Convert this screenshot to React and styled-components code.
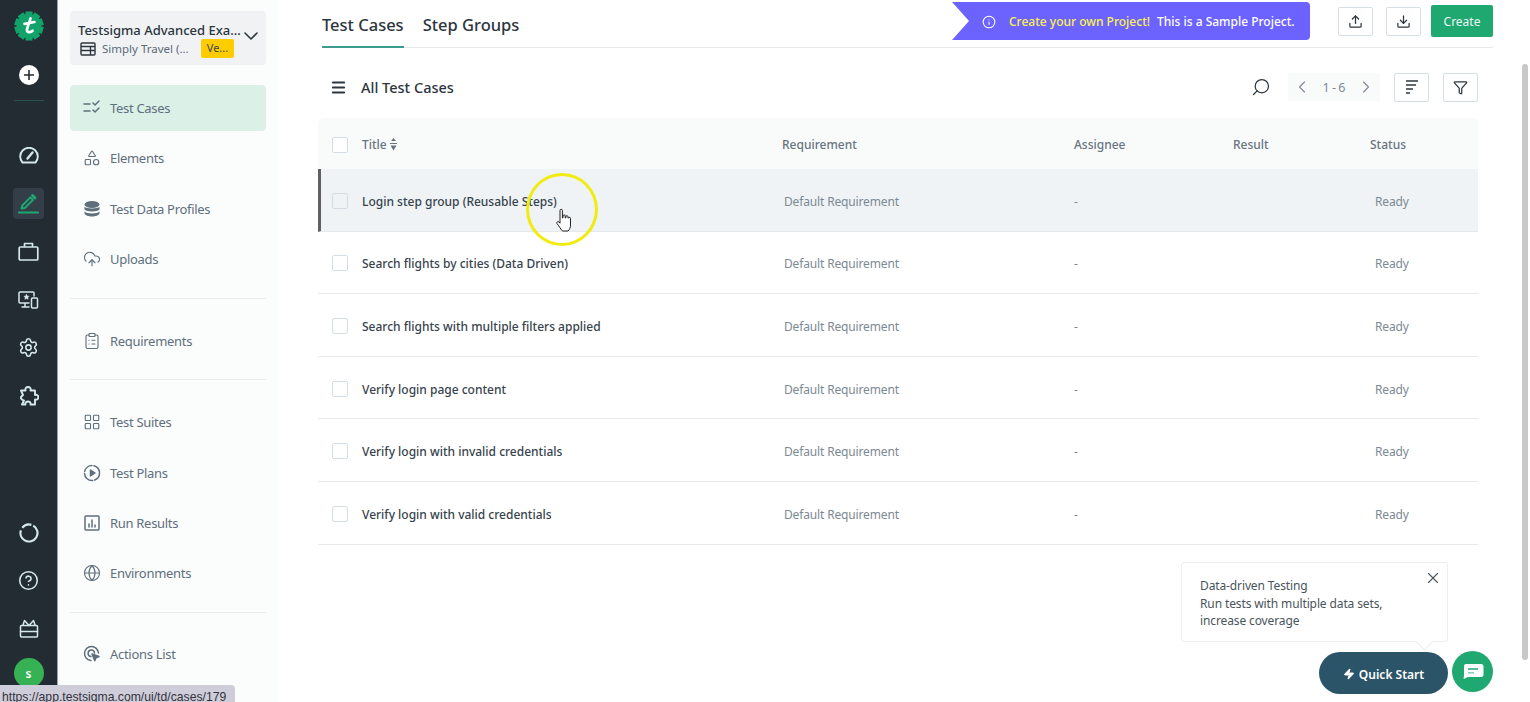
import React from "react";
import styled, { createGlobalStyle } from "styled-components";
import {
  CircleHelp,
  ChevronDown,
  ChevronLeft,
  ChevronRight,
  Settings,
  Shapes,
  CloudUpload,
  ClipboardList,
  LayoutGrid,
  Globe,
  Upload,
  Download,
  Funnel,
  Info,
  X,
  Zap,
  Menu,
  Search,
} from "lucide-react";

const GlobalStyle = createGlobalStyle`
  html, body {
    margin: 0;
    height: 100%;
    overflow: hidden;
    background: #fff;
    font-family: "Noto Sans", "Open Sans", sans-serif;
    color: #2c363e;
  }
  * { box-sizing: border-box; }
`;

const Page = styled.div`
  position: relative;
  display: flex;
  width: 1530px;
  height: 702px;
  overflow: hidden;
`;

const Rail = styled.nav`
  flex: 0 0 58px;
  display: flex;
  flex-direction: column;
  align-items: center;
  padding-top: 11px;
  background: #232c33;
  border-right: 1px solid #9aa3a8;
  color: #d5e8ea;
`;

const RailDivider = styled.div`
  width: 30px;
  height: 1px;
  margin: 0 0 39px;
  background: #27504f;
`;

const RailButton = styled.div`
  display: flex;
  align-items: center;
  justify-content: center;
  width: 31px;
  height: 31px;
  margin-bottom: ${(p) => p.$gap ?? 17}px;
  border-radius: 4px;
  background: ${(p) => (p.$active ? "#333e48" : "transparent")};
  color: ${(p) => (p.$active ? "#1fa971" : "inherit")};
`;

const RailSpacer = styled.div`
  flex: 1;
`;

const AddButton = styled.div`
  display: flex;
  align-items: center;
  justify-content: center;
  width: 20px;
  height: 20px;
  margin: 24px 0 15px;
  border-radius: 50%;
  background: #fff;
  color: #232c33;
`;

const Avatar = styled.div`
  display: flex;
  align-items: center;
  justify-content: center;
  width: 30px;
  height: 30px;
  border-radius: 50%;
  margin-bottom: 14px;
  background: #36b255;
  color: #fff;
  font-size: 12px;
  font-weight: 600;
`;

const Side = styled.aside`
  flex: 0 0 220px;
  padding: 11px 12px 0;
  background: #fbfcfc;
`;

const ProjectCard = styled.div`
  position: relative;
  height: 54px;
  margin-bottom: 20px;
  padding: 10px 8px 0;
  border-radius: 4px;
  background: #f1f2f4;
`;

const ProjectName = styled.div`
  font-size: 13px;
  line-height: 18px;
  font-weight: 500;
  color: #2c363e;
  white-space: nowrap;
`;

const ProjectMeta = styled.div`
  display: flex;
  align-items: center;
  padding-left: 2px;
  font-size: 11.5px;
  line-height: 18px;
  color: #5d6b78;
  white-space: nowrap;
`;

const ProjectApp = styled.span`
  margin-left: 6px;
  width: 99px;
`;

const VersionTag = styled.span`
  width: 33px;
  height: 19px;
  border-radius: 2px;
  text-align: center;
  font-size: 11px;
  line-height: 18px;
  background: #ffcc00;
  color: #3b4450;
`;

const ProjectChevron = styled.span`
  position: absolute;
  top: 13px;
  right: 3px;
  color: #2c363e;
`;

const MenuItem = styled.div`
  display: flex;
  align-items: center;
  gap: 9px;
  height: 46px;
  margin-bottom: 4.4px;
  padding-left: 13px;
  border-radius: 4px;
  font-size: 13px;
  letter-spacing: -0.3px;
  color: #5f6f7c;
  background: ${(p) => (p.$active ? "#dbf1e8" : "transparent")};
`;

const MenuDivider = styled.div`
  height: 1px;
  margin: ${(p) => p.$top ?? 16}px 0 ${(p) => p.$bottom ?? 19}px;
  background: #e9ecee;
`;

const Main = styled.main`
  flex: 1;
  padding-left: 40px;
  min-width: 0;
`;

const TopBar = styled.header`
  display: flex;
  align-items: flex-start;
  width: 1171px;
  height: 48px;
  margin-left: 4px;
  border-bottom: 1px solid #e6e9ec;
`;

const Tab = styled.div`
  height: 48px;
  margin-right: 19px;
  padding-top: 13px;
  font-size: 16.5px;
  line-height: 24px;
  font-weight: 500;
  color: #2c363e;
  border-bottom: 2px solid ${(p) => (p.$active ? "#3c9a8e" : "transparent")};
`;

const Banner = styled.div`
  display: flex;
  align-items: center;
  width: 358px;
  height: 38px;
  margin: 2px 0 0 auto;
  padding: 1px 0 0 30px;
  border-radius: 0 4px 4px 0;
  font-size: 12px;
  font-weight: 500;
  color: #fff;
  background: #6c63ff;
  clip-path: polygon(0 0, 100% 0, 100% 100%, 0 100%, 17px 50%);
`;

const BannerLink = styled.span`
  margin: 0 7px 0 13px;
  color: #fbf24b;
`;

const IconButton = styled.button`
  display: flex;
  align-items: center;
  justify-content: center;
  width: 35px;
  height: 29px;
  padding: 0;
  border: 1px solid #d6dfe3;
  border-radius: 2px;
  background: #fff;
  color: #2c363e;
`;

const TopButtons = styled.div`
  display: flex;
  align-items: flex-start;
  margin: 7px 0 0 28px;
  gap: 13px;
`;

const CreateButton = styled.button`
  width: 62px;
  height: 32px;
  margin: -2px 0 0 -3px;
  border: 0;
  border-radius: 2px;
  font: inherit;
  font-size: 12px;
  color: #eef8f4;
  background: #1fa971;
`;

const ListBar = styled.div`
  display: flex;
  align-items: center;
  width: 1160px;
  height: 30px;
  margin: 24px 0 16px;
  padding-left: 12px;
`;

const ListTitle = styled.h1`
  margin: 0 0 0 14px;
  font-size: 14.5px;
  font-weight: 500;
  color: #2c363e;
`;

const SearchIcon = styled.span`
  display: flex;
  margin-left: auto;
  transform: scaleX(-1);
  color: #2c363e;
`;

const Pager = styled.div`
  display: flex;
  align-items: center;
  justify-content: space-between;
  width: 92px;
  height: 28px;
  margin: 0 14px 0 17px;
  padding: 0 4px;
  font-size: 12.5px;
  word-spacing: -1px;
  color: #7d8a94;
  background: #f9fafa;
`;

const ListActions = styled.div`
  display: flex;
  gap: 14px;
`;

const Table = styled.div`
  width: 1160px;
`;

const Row = styled.div`
  display: grid;
  grid-template-columns: 30px 420px 292px 159px 137px 1fr;
  align-items: center;
  height: ${(p) => (p.$head ? 51 : 62.6)}px;
  padding-top: 2px;
  border-bottom: ${(p) => (p.$head ? "0" : "1px solid #e6e9ec")};
  border-left: ${(p) => (p.$hover ? "3px solid #625f63" : "0")};
  border-radius: ${(p) => (p.$head ? "6px 6px 0 0" : "0")};
  padding-left: ${(p) => (p.$hover ? "11px" : "14px")};
  font-size: 12px;
  color: #7c8993;
  background: ${(p) => (p.$hover ? "#eff3f6" : p.$head ? "#f9fbfb" : "#fff")};
`;

const Check = styled.span`
  width: 16px;
  height: 16px;
  border: 1px solid #d4dee4;
  border-radius: 2px;
  background: ${(p) => (p.$hover ? "#eff3f6" : "#fff")};
`;

const HeadCell = styled.span`
  display: flex;
  align-items: center;
  gap: 3px;
  font-size: 12px;
  font-weight: 500;
  color: #67747f;
`;

const TitleCell = styled.span`
  margin-top: 1px;
  font-size: 12px;
  font-weight: 500;
  color: #36434d;
`;

const ValueCell = styled.span`
  margin-top: 1px;
  padding-left: ${(p) => p.$indent ?? 0}px;
  letter-spacing: -0.15px;
`;

const Scrollbar = styled.div`
  position: absolute;
  top: 64px;
  left: 1522px;
  width: 6px;
  height: 596px;
  border-radius: 3px;
  background: #c8c8c8;
`;

const StatusUrl = styled.div`
  position: absolute;
  left: 0;
  bottom: 0;
  width: 235px;
  height: 17px;
  padding: 0 0 0 2px;
  border-radius: 0 4px 0 0;
  overflow: hidden;
  font-family: "Liberation Sans", sans-serif;
  font-size: 12.2px;
  line-height: 24px;
  color: #33333d;
  background: #cfcdda;
`;

const Tip = styled.div`
  position: absolute;
  left: 1181px;
  top: 562px;
  width: 267px;
  height: 80px;
  padding: 14px 18px;
  border: 1px solid #eceeef;
  border-radius: 3px;
  font-size: 12px;
  letter-spacing: -0.12px;
  line-height: 17.7px;
  color: #4a545c;
  background: #fff;

  &::after {
    content: "";
    position: absolute;
    right: 16px;
    bottom: -7px;
    width: 12px;
    height: 12px;
    background: #fff;
    border-right: 1px solid #eceeef;
    border-bottom: 1px solid #eceeef;
    transform: rotate(45deg);
  }
`;

const TipClose = styled.span`
  position: absolute;
  top: 6px;
  right: 5px;
  display: flex;
  color: #4a545c;
`;

const QuickStart = styled.button`
  position: absolute;
  left: 1319px;
  top: 652px;
  display: flex;
  align-items: center;
  justify-content: center;
  gap: 4px;
  width: 129px;
  height: 42px;
  padding: 2px 0 0;
  border: 0;
  border-radius: 21px;
  font: inherit;
  font-size: 12px;
  font-weight: 600;
  color: #fff;
  background: #2c5468;
`;

const ChatButton = styled.button`
  position: absolute;
  left: 1452px;
  top: 651px;
  display: flex;
  align-items: center;
  justify-content: center;
  width: 41px;
  height: 41px;
  padding: 0;
  border: 0;
  border-radius: 50%;
  background: #1fa971;
`;

const CursorRing = styled.div`
  position: absolute;
  left: 526px;
  top: 173px;
  width: 72px;
  height: 73px;
  border: 3px solid #f0ec10;
  border-radius: 50%;
`;

const HandCursor = styled.svg`
  position: absolute;
  left: 556px;
  top: 208px;
`;

const teeth = [0, 36, 72, 108, 144];

const Logo = () => (
  <svg width="30" height="30" viewBox="0 0 30 30">
    {teeth.map((a) => (
      <rect key={a} x="11.5" y="0.5" width="7" height="29" rx="0.5" fill="#12a36b" transform={`rotate(${a} 15 15)`} />
    ))}
    <circle cx="15" cy="15" r="12" fill="#12a36b" />
    <path d="M16.5 7.5 C15.5 11 13.5 16 13 18.5 C12.6 21.5 15.5 22 18.5 19.8 M10.5 12.8 L20.5 11" fill="none" stroke="#fff" strokeWidth="2.7" strokeLinecap="round" />
  </svg>
);

const line = { fill: "none", stroke: "currentColor", strokeWidth: 1.5, strokeLinecap: "round", strokeLinejoin: "round" };
const railLine = { ...line, strokeWidth: 1.9 };

const GaugeIcon = () => (
  <svg width="20" height="18" viewBox="0 0 20 18" {...railLine}>
    <path d="M3.5 15.5A8.8 8.8 0 1 1 16.5 15.5Z" />
    <path d="M8.5 11.5L13.5 5.5" strokeWidth="2.4" />
  </svg>
);

const PencilIcon = () => (
  <svg width="21" height="21" viewBox="0 0 21 21" {...railLine}>
    <path d="M3.5 15.5L4.3 12.5L12.5 4.3L15 6.8L6.800 15Z" />
    <path d="M14.5 2.5L17 5" strokeWidth="2.8" />
    <path d="M1 19.5H20" strokeWidth="2.2" />
  </svg>
);

const BriefcaseIcon = () => (
  <svg width="21" height="19" viewBox="0 0 21 19" {...line} strokeLinecap="butt">
    <rect x="1.2" y="5" width="18.6" height="13" rx="1" strokeWidth="1.7" />
    <path d="M6.5 5V1.5H14.5V5" strokeWidth="1.7" />
  </svg>
);

const PuzzleIcon = () => (
  <svg width="20" height="20" viewBox="0 0 20 20" {...railLine}>
    <path d="M2 4.500H6.5C6 2.5 7 1 9 1s3.200 1.500 2.500 3.500H16V9c2-.7 3.300.5 3.300 2.300S18 14 16 13.500V18.500H11.5C12 16.500 10.500 15.500 9 15.500S6 16.500 6.500 18.500H3L5 14.500C3 14 1.500 12.500 2 11L4 9Z" />
  </svg>
);

const ChecksIcon = () => (
  <svg width="18" height="18" viewBox="0 0 18 18" {...line}>
    <path d="M1 5h6M1 12h6M10 4l2 2 4-4M10 11l2 2 4-4" />
  </svg>
);

const DataIcon = () => (
  <svg width="18" height="18" viewBox="0 0 18 18" fill="#5f6f7c">
    <ellipse cx="9" cy="4.5" rx="7.5" ry="3.5" />
    <path d="M1.5 6.8C3 9 15 9 16.5 6.8V9.500C15 12 3 12 1.5 9.500Z" />
    <path d="M1.5 11.5C3 14 15 14 16.5 11.5V13.500C15 17.500 3 17.500 1.5 13.500Z" />
  </svg>
);

const PlayRingIcon = () => (
  <svg width="18" height="18" viewBox="0 0 18 18" {...line}>
    <circle cx="9" cy="9" r="7.5" strokeDasharray="9 2 12 2 10 2" />
    <path d="M7.5 6v6l4.500-3z" fill="currentColor" />
  </svg>
);

const ResultsIcon = () => (
  <svg width="18" height="18" viewBox="0 0 18 18" {...line}>
    <rect x="2" y="2" width="14" height="14" rx="1" />
    <path d="M6 13v-3M9 13V6M12 13v-2" />
  </svg>
);

const ActionsIcon = () => (
  <svg width="18" height="18" viewBox="0 0 18 18" {...line}>
    <path d="M8 15.5A7 7 0 1 1 15.5 8M8 11.5A3.2 3.2 0 1 1 11.5 8" />
    <path d="M9 9l7 2.500-3 1.200-1.200 3z" fill="currentColor" />
  </svg>
);

const DevicesIcon = () => (
  <svg width="21" height="20" viewBox="0 0 21 20" {...line}>
    <path d="M11 13H2a1 1 0 0 1-1-1V3a1 1 0 0 1 1-1h13a1 1 0 0 1 1 1v3M7 13v4M4 17h7" />
    <rect x="13.5" y="8" width="6" height="10" rx="1" />
    <path d="M8.5 4.5l.8 1.600 1.700.2-1.200 1.200.3 1.700-1.600-.8-1.600.8.3-1.700L6 6.300l1.700-.2z" fill="currentColor" strokeWidth="0.6" />
  </svg>
);

const SpinnerIcon = () => (
  <svg width="20" height="20" viewBox="0 0 20 20" fill="none" stroke="currentColor" strokeWidth="2.2">
    <circle cx="10" cy="10" r="8.5" strokeDasharray="38 3 10 3" transform="rotate(-60 10 10)" />
  </svg>
);

const GiftIcon = () => (
  <svg width="20" height="20" viewBox="0 0 20 20" {...line}>
    <rect x="1.5" y="6.5" width="17" height="11.5" rx="1" />
    <path d="M1.5 12.5h17M10 6.500L5.500 1.500 4 6M10 6.500L14.500 1.500 16 6" />
  </svg>
);

const ProjectIcon = () => (
  <svg width="16" height="14" viewBox="0 0 16 14" fill="none" stroke="#2c363e" strokeWidth="1.4">
    <rect x="1" y="1" width="14" height="12" rx="1" />
    <path d="M1 4.5h14M1 8.5h14M10.5 4.5V13" />
  </svg>
);

const SortBarsIcon = () => (
  <svg width="14" height="16" viewBox="0 0 14 16" fill="none" stroke="#2c363e" strokeWidth="1.6">
    <path d="M1 2h12M1 6h10M1 10h7M1 14h4" />
  </svg>
);

const SortArrows = () => (
  <svg width="7" height="13" viewBox="0 0 7 13" fill="#67747f">
    <path d="M3.5 0L6 3H1zM0 5h7v1H0zM3.5 12.5L0.5 7.500h6z" />
  </svg>
);

const ChatIcon = () => (
  <svg width="22" height="17" viewBox="0 0 22 17">
    <path d="M4 1h15a2.500 2.500 0 0 1 2.500 2.500v8A2.500 2.500 0 0 1 19 14H6l-4.500 2 .5-3.500V3a2 2 0 0 1 2-2z" fill="#fff" />
    <path d="M6 6h10" stroke="#1fa971" strokeWidth="1.5" />
    <path d="M6 9.8h6" stroke="#7ccfb0" strokeWidth="1.5" />
  </svg>
);

const cases = [
  "Login step group (Reusable Steps)",
  "Search flights by cities (Data Driven)",
  "Search flights with multiple filters applied",
  "Verify login page content",
  "Verify login with invalid credentials",
  "Verify login with valid credentials",
];

const icon = { size: 18, strokeWidth: 1.5 };

export default function App() {
  return (
    <>
      <GlobalStyle />
      <Page>
        <Rail>
          <Logo />
          <AddButton>
            <svg width="12" height="12" viewBox="0 0 12 12" stroke="#232c33" strokeWidth="1.6">
              <path d="M6 1v10M1 6h10" />
            </svg>
          </AddButton>
          <RailDivider />
          <RailButton><GaugeIcon /></RailButton>
          <RailButton $active><PencilIcon /></RailButton>
          <RailButton><BriefcaseIcon /></RailButton>
          <RailButton><DevicesIcon /></RailButton>
          <RailButton><Settings size={21} strokeWidth={1.8} /></RailButton>
          <RailButton><PuzzleIcon /></RailButton>
          <RailSpacer />
          <RailButton><SpinnerIcon /></RailButton>
          <RailButton><CircleHelp size={21} strokeWidth={1.8} /></RailButton>
          <RailButton $gap={14}><GiftIcon /></RailButton>
          <Avatar>s</Avatar>
        </Rail>

        <Side>
          <ProjectCard>
            <ProjectName>Testsigma Advanced Exa...</ProjectName>
            <ProjectMeta>
              <ProjectIcon />
              <ProjectApp>Simply Travel (...</ProjectApp>
              <VersionTag>Ve...</VersionTag>
            </ProjectMeta>
            <ProjectChevron><ChevronDown size={24} strokeWidth={1.6} /></ProjectChevron>
          </ProjectCard>
          <MenuItem $active><ChecksIcon />Test Cases</MenuItem>
          <MenuItem><Shapes {...icon} />Elements</MenuItem>
          <MenuItem><DataIcon />Test Data Profiles</MenuItem>
          <MenuItem><CloudUpload {...icon} />Uploads</MenuItem>
          <MenuDivider />
          <MenuItem><ClipboardList {...icon} />Requirements</MenuItem>
          <MenuDivider $top={15} />
          <MenuItem><LayoutGrid {...icon} />Test Suites</MenuItem>
          <MenuItem><PlayRingIcon />Test Plans</MenuItem>
          <MenuItem><ResultsIcon />Run Results</MenuItem>
          <MenuItem><Globe {...icon} />Environments</MenuItem>
          <MenuDivider $bottom={18} />
          <MenuItem><ActionsIcon />Actions List</MenuItem>
        </Side>

        <Main>
          <TopBar>
            <Tab $active>Test Cases</Tab>
            <Tab>Step Groups</Tab>
            <Banner>
              <Info size={14} strokeWidth={1.8} />
              <BannerLink>Create your own Project!</BannerLink>
              This is a Sample Project.
            </Banner>
            <TopButtons>
              <IconButton><Upload size={15} /></IconButton>
              <IconButton><Download size={15} /></IconButton>
              <CreateButton>Create</CreateButton>
            </TopButtons>
          </TopBar>

          <ListBar>
            <Menu size={17} strokeWidth={2.6} />
            <ListTitle>All Test Cases</ListTitle>
            <SearchIcon><Search size={20} strokeWidth={1.5} /></SearchIcon>
            <Pager>
              <ChevronLeft size={20} strokeWidth={1.3} />
              1 - 6
              <ChevronRight size={20} strokeWidth={1.3} />
            </Pager>
            <ListActions>
              <IconButton><SortBarsIcon /></IconButton>
              <IconButton><Funnel size={15} /></IconButton>
            </ListActions>
          </ListBar>

          <Table>
            <Row $head>
              <Check />
              <HeadCell>Title <SortArrows /></HeadCell>
              <HeadCell>Requirement</HeadCell>
              <HeadCell>Assignee</HeadCell>
              <HeadCell>Result</HeadCell>
              <HeadCell>Status</HeadCell>
            </Row>
            {cases.map((name, i) => (
              <Row key={name} $hover={i === 0}>
                <Check $hover={i === 0} />
                <TitleCell>{name}</TitleCell>
                <ValueCell $indent={2}>Default Requirement</ValueCell>
                <ValueCell>-</ValueCell>
                <ValueCell />
                <ValueCell $indent={5}>Ready</ValueCell>
              </Row>
            ))}
          </Table>
        </Main>

        <Scrollbar />
        <CursorRing />
        <HandCursor width="16" height="25" viewBox="0 0 16 25">
          <path d="M4 2.500a1.200 1.200 0 0 1 2.400 0v7.500l.6-.2V8a1.100 1.100 0 0 1 2.200 0v2l.6-.1V8.800a1.100 1.100 0 0 1 2.200 0v1.400l.5-.1a1 1 0 0 1 2 .5v6.400c0 2.500-1 4.500-2.500 6H6.500C4.500 21 3 18 1 15.500c-.8-1.200.8-2.500 2-1.500l1 1.200z" fill="#fff" stroke="#222" strokeWidth="1" strokeLinejoin="round" />
        </HandCursor>

        <Tip>
          Data-driven Testing
          <br />
          Run tests with multiple data sets,
          <br />
          increase coverage
          <TipClose><X size={18} strokeWidth={1.5} /></TipClose>
        </Tip>
        <QuickStart><Zap size={12} fill="#fff" />Quick Start</QuickStart>
        <ChatButton><ChatIcon /></ChatButton>
        <StatusUrl>https://app.testsigma.com/ui/td/cases/179</StatusUrl>
      </Page>
    </>
  );
}
